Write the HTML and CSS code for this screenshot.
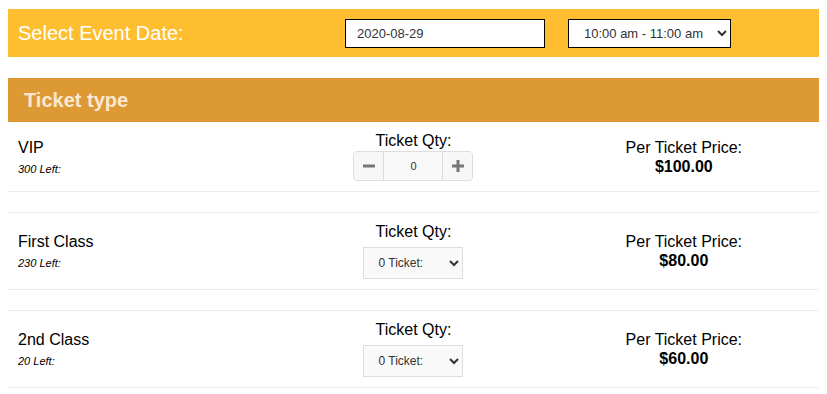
FILE: index.html
```html
<!DOCTYPE html>
<html>
<head>
<meta charset="utf-8">
<link rel="stylesheet" href="styles.css">
</head>
<body>
<div class="datebar">
  <label class="date-label">Select Event Date:</label>
  <input class="date-input" type="text" value="2020-08-29">
  <select class="time-select"><option>10:00 am - 11:00 am</option></select>
</div>

<div class="tickets">
  <div class="tickets-head">Ticket type</div>

  <div class="trow">
    <div class="tcol tname">
      <div class="name">VIP</div>
      <div class="left">300 Left:</div>
    </div>
    <div class="tcol tqty">
      <div class="qlabel">Ticket Qty:</div>
      <div class="stepper">
        <button class="sbtn minus" type="button"><svg width="12" height="12" viewBox="0 0 12 12"><rect x="0" y="4.5" width="12" height="3" fill="#777"/></svg></button>
        <input class="sval" type="text" value="0">
        <button class="sbtn plus" type="button"><svg width="12" height="12" viewBox="0 0 12 12"><rect x="0" y="4.5" width="12" height="3" fill="#777"/><rect x="4.5" y="0" width="3" height="12" fill="#777"/></svg></button>
      </div>
    </div>
    <div class="tcol tprice">
      <div class="plabel">Per Ticket Price:</div>
      <div class="price">$100.00</div>
    </div>
  </div>
  <div class="spacer"></div>

  <div class="trow">
    <div class="tcol tname">
      <div class="name">First Class</div>
      <div class="left">230 Left:</div>
    </div>
    <div class="tcol tqty">
      <div class="qlabel">Ticket Qty:</div>
      <select class="qsel"><option>0 Ticket:</option></select>
    </div>
    <div class="tcol tprice">
      <div class="plabel">Per Ticket Price:</div>
      <div class="price">$80.00</div>
    </div>
  </div>
  <div class="spacer"></div>

  <div class="trow">
    <div class="tcol tname">
      <div class="name">2nd Class</div>
      <div class="left">20 Left:</div>
    </div>
    <div class="tcol tqty">
      <div class="qlabel">Ticket Qty:</div>
      <select class="qsel"><option>0 Ticket:</option></select>
    </div>
    <div class="tcol tprice">
      <div class="plabel">Per Ticket Price:</div>
      <div class="price">$60.00</div>
    </div>
  </div>
</div>
</body>
</html>
```

FILE: styles.css
```css
body {
  margin: 8px;
  font-family: "Liberation Sans", Arial, sans-serif;
  color: #000;
  background: #fff;
}

.datebar {
  margin-top: 1px;
  height: 48px;
  background: #ffbe2f;
  display: flex;
  align-items: center;
  padding: 0 10px;
}

.date-label {
  width: 327px;
  color: #fff;
  font-size: 20px;
}

.date-input {
  box-sizing: border-box;
  width: 200px;
  height: 29px;
  border: 1px solid #000;
  border-radius: 0;
  padding: 0 11px;
  font-family: inherit;
  font-size: 13px;
  color: #333;
  background: #fff;
  outline: none;
}

.time-select {
  box-sizing: border-box;
  margin-left: 23px;
  width: 163px;
  height: 29px;
  border: 1px solid #000;
  border-radius: 0;
  padding: 0 10px 0 11px;
  font-family: inherit;
  font-size: 13px;
  color: #333;
  background: #fff;
}

.tickets {
  margin-top: 21px;
}

.tickets-head {
  height: 44px;
  box-sizing: border-box;
  background: #dd9933;
  color: #fae8d2;
  font-weight: bold;
  font-size: 20px;
  line-height: 44px;
  padding-left: 16px;
}

.trow {
  display: grid;
  grid-template-columns: 1fr 1fr 1fr;
  border-bottom: 1px solid #eee;
}

.spacer {
  height: 20px;
  border-bottom: 1px solid #eee;
}

.tcol {
  display: flex;
  flex-direction: column;
}

.tname {
  justify-content: center;
  padding-left: 10px;
}

.name {
  font-size: 16px;
  line-height: 20px;
}

.left {
  font-size: 11px;
  font-style: italic;
  line-height: 14px;
  margin-top: 4px;
}

.tqty {
  align-items: center;
  padding: 9px 0 10px;
}

.qlabel {
  font-size: 16px;
  line-height: 20px;
}

.stepper {
  display: flex;
  width: 120px;
  height: 30px;
  box-sizing: border-box;
  border: 1px solid #ddd;
  border-radius: 4px;
  background: #f7f7f7;
  overflow: hidden;
}

.sbtn {
  width: 30px;
  height: 100%;
  border: none;
  background: #f7f7f7;
  padding: 0;
  display: flex;
  align-items: center;
  justify-content: center;
}

.minus {
  border-right: 1px solid #ddd;
}

.plus {
  border-left: 1px solid #ddd;
}

.sval {
  flex: 1;
  min-width: 0;
  border: none;
  background: #f9f9f9;
  text-align: center;
  font-family: inherit;
  font-size: 11px;
  color: #333;
  padding: 0;
  outline: none;
}

.qsel {
  margin-top: 5px;
  box-sizing: border-box;
  width: 100px;
  height: 32px;
  border: 1px solid #ddd;
  border-radius: 0;
  background: #f9f9f9;
  padding: 0 8px 0 10px;
  font-family: inherit;
  font-size: 12px;
  color: #333;
}

.tprice {
  align-items: center;
  justify-content: center;
}

.plabel {
  font-size: 16px;
  line-height: 19px;
}

.price {
  font-size: 16px;
  font-weight: bold;
  line-height: 19px;
}
```
